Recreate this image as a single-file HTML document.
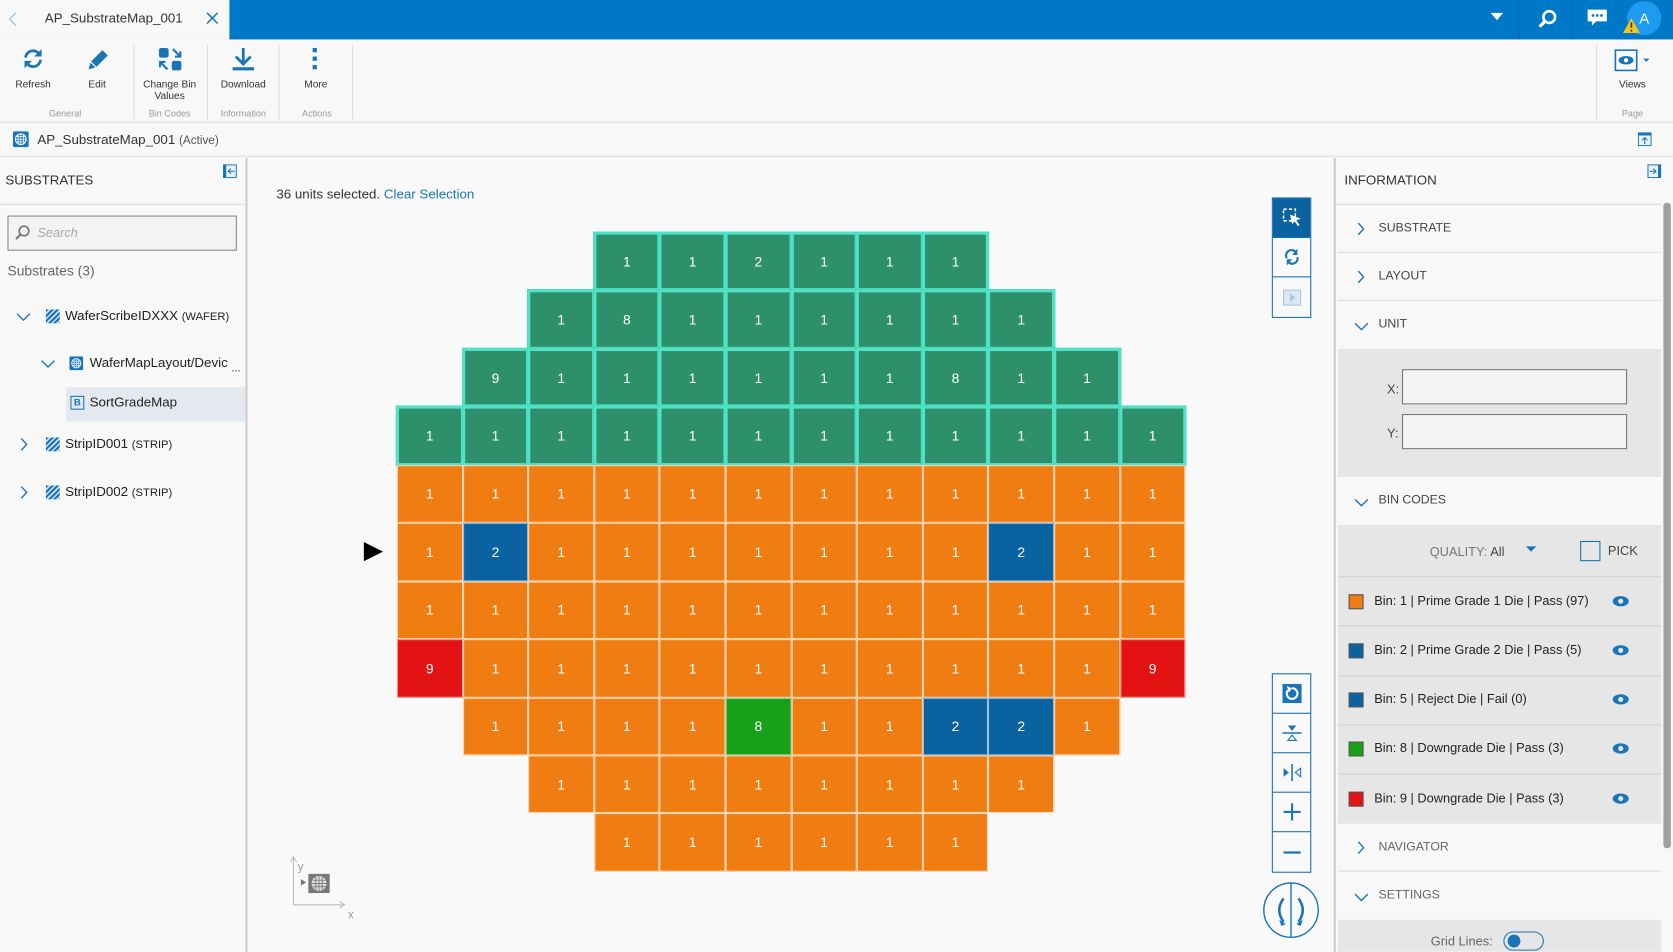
<!DOCTYPE html>
<html><head><meta charset="utf-8"><style>
*{box-sizing:border-box;margin:0;padding:0}
html,body{width:1673px;height:952px;overflow:hidden;background:#f9f9f9}
#s{position:absolute;left:0;top:0;width:1568px;height:892px;transform:scale(1.06696);transform-origin:0 0;font-family:"Liberation Sans",sans-serif;color:#333;background:#f9f9f9}
.a{position:absolute}
.top{left:0;top:0;width:1568px;height:37px;background:#0078c8}
.tab{left:0;top:0;width:215px;height:37px;background:#f8f8f8}
.tb{left:0;top:37px;width:1568px;height:78px;background:#f8f8f8;border-bottom:1px solid #ddd}
.btn{position:absolute;top:44px;font-size:9.5px;text-align:center;color:#333;line-height:11px}
.grp{position:absolute;top:101px;font-size:8.5px;color:#999;text-align:center}
.sep{position:absolute;top:42px;width:1px;height:70px;background:#ddd}
.bc{left:0;top:116px;width:1568px;height:31px;background:#f8f8f8;border-bottom:1px solid #ddd}
.lp{left:0;top:148px;width:232px;height:744px;background:#f8f8f8;border-right:2px solid #ccc}
.rp{left:1250px;top:148px;width:318px;height:744px;background:#f8f8f8;border-left:2px solid #ccc}
.row{position:absolute;left:2px;width:303px;border-bottom:1px solid #ddd;font-size:12px;color:#444}
.cr,.cd{position:absolute}
.grid{position:absolute;left:372px;top:218px;display:grid;grid-template-columns:repeat(12,61.6px);grid-template-rows:repeat(11,54.45px)}
.grid i{display:block}
.grid b{display:flex;align-items:center;justify-content:center;color:#fff;font-weight:normal;font-size:13px;background:#ef7d11;border:1px solid #fbd9b8}
.grid b.g{background:#2e8f6b;border:3px solid #4fe2c6;margin:-1px}
.grid b.u{background:#0a63a0;border-color:#9cc0dc}
.grid b.r{background:#e41313;border-color:#f4a0a0}
.grid b.n{background:#18a01a;border-color:#a8d8a8}
.tool{position:absolute;left:1192px;width:37px;border:1.5px solid #1a6fa8;background:#f9f9f9}
.tool div{height:37px;border-bottom:1px solid #1a6fa8;display:flex;align-items:center;justify-content:center;color:#1a6fa8}
.tool div:last-child{border-bottom:none}
.bin{position:absolute;left:2px;width:303px;height:46.5px;border-bottom:1px solid #d0d0d0;font-size:12px;color:#222}
.sw{position:absolute;left:10px;top:16px;width:14px;height:14px;border:1px solid #555}
.eye{position:absolute;left:257px;top:17px}
</style></head><body><div id="s">
<div class="a top"></div><div class="a tab"></div>
<svg class="a" style="left:8px;top:11px" width="8" height="14"><path d="M7 1L1 7L7 13" stroke="#9cc6e6" fill="none" stroke-width="1.3"/></svg>
<div class="a" style="left:42px;top:10px;font-size:12.5px;color:#333">AP_SubstrateMap_001</div>
<svg class="a" style="left:193px;top:11px" width="12" height="12"><path d="M1 1L11 11M11 1L1 11" stroke="#1a75b8" stroke-width="1.4"/></svg>
<svg class="a" style="left:1397px;top:12px" width="12" height="8"><path d="M0 0H12L6 7Z" fill="#fff"/></svg>
<div class="a" style="left:1423px;top:0;width:1px;height:37px;background:#0a68ad"></div>
<svg class="a" style="left:1440px;top:8px" width="20" height="20"><circle cx="12" cy="8" r="5.5" stroke="#fff" stroke-width="2.5" fill="none"/><path d="M8 12L3 17" stroke="#fff" stroke-width="3"/></svg>
<div class="a" style="left:1473px;top:0;width:1px;height:37px;background:#0a68ad"></div>
<svg class="a" style="left:1487px;top:8px" width="20" height="18"><path d="M1 1H19V12H9L5 16V12H1Z" fill="#fff"/><circle cx="6" cy="6.5" r="1.3" fill="#0078c8"/><circle cx="10" cy="6.5" r="1.3" fill="#0078c8"/><circle cx="14" cy="6.5" r="1.3" fill="#0078c8"/></svg>
<div class="a" style="left:1525px;top:1px;width:32px;height:32px;border-radius:50%;background:#1d9bf0;color:#fff;font-size:14px;text-align:center;line-height:32px">A</div>
<svg class="a" style="left:1521px;top:17px" width="16" height="14"><path d="M8 0L16 14H0Z" fill="#f5c518"/><path d="M8 4V9M8 11V12.5" stroke="#333" stroke-width="1.6"/></svg>

<div class="a tb"></div>
<svg class="a" style="left:20px;top:44px" width="22" height="22"><path d="M4 10A7 7 0 0 1 17 7M18 12A7 7 0 0 1 5 15" stroke="#1a75b8" stroke-width="2.6" fill="none"/><path d="M19 2V9H12Z M3 20V13H10Z" fill="#1a75b8"/></svg>
<div class="btn" style="left:8px;top:74px;width:46px">Refresh</div>
<svg class="a" style="left:80px;top:44px" width="24" height="24"><path d="M3 21L5 14L16 3L21 8L10 19Z" fill="#1a75b8"/><path d="M5 14L10 19" stroke="#f8f8f8" stroke-width="1.2"/></svg>
<div class="btn" style="left:70px;top:74px;width:42px">Edit</div>
<div class="sep" style="left:125px"></div>
<svg class="a" style="left:148px;top:44px" width="24" height="24"><rect x="1" y="1" width="9" height="9" rx="2" fill="#1a75b8"/><rect x="13" y="13" width="9" height="9" rx="2" fill="#1a75b8"/><path d="M14 2L21 9M21 4V9H16M9 21L2 14M2 19V14H7" stroke="#1a75b8" stroke-width="2" fill="none"/></svg>
<div class="btn" style="left:128px;top:74px;width:62px">Change Bin<br>Values</div>
<div class="sep" style="left:194px"></div>
<svg class="a" style="left:217px;top:44px" width="22" height="24"><path d="M11 1V15M4 9L11 16L18 9" stroke="#1a75b8" stroke-width="2.6" fill="none"/><rect x="1" y="19" width="20" height="3" fill="#1a75b8"/></svg>
<div class="btn" style="left:197px;top:74px;width:62px">Download</div>
<div class="sep" style="left:261px"></div>
<div class="a" style="left:293px;top:45px;width:4px;height:4px;background:#1a75b8;box-shadow:0 8px 0 #1a75b8,0 16px 0 #1a75b8"></div>
<div class="btn" style="left:268px;top:74px;width:56px">More</div>
<div class="sep" style="left:330px"></div>
<div class="grp" style="left:30px;width:62px">General</div>
<div class="grp" style="left:128px;width:62px">Bin Codes</div>
<div class="grp" style="left:197px;width:62px">Information</div>
<div class="grp" style="left:266px;width:62px">Actions</div>
<div class="sep" style="left:1496px"></div>
<svg class="a" style="left:1513px;top:46px" width="36" height="22"><rect x="1" y="1" width="20" height="19" fill="none" stroke="#1a75b8" stroke-width="1.5"/><ellipse cx="11" cy="10.5" rx="7" ry="4" fill="#1a75b8"/><circle cx="11" cy="10.5" r="2" fill="#fff"/><path d="M27 9H33L30 12Z" fill="#1a75b8"/></svg>
<div class="btn" style="left:1505px;top:74px;width:50px">Views</div>
<div class="grp" style="left:1505px;width:50px">Page</div>

<div class="a bc"></div>
<svg class="a" style="left:12px;top:123px" width="15" height="15"><rect width="15" height="15" rx="2" fill="#1a75b8"/><circle cx="7.5" cy="7.5" r="5" fill="none" stroke="#fff"/><path d="M2.5 7.5H12.5M7.5 2.5V12.5M4 5H11M4 10H11M5 3V12M10 3V12" stroke="#fff" stroke-width=".7"/></svg>
<div class="a" style="left:35px;top:124px;font-size:12.5px">AP_SubstrateMap_001 <span style="font-size:11px;color:#555">(Active)</span></div>
<svg class="a" style="left:1535px;top:124px" width="13" height="13"><rect x=".5" y=".5" width="12" height="12" fill="#e8f1f8" stroke="#1a75b8"/><rect x=".5" y=".5" width="12" height="2.5" fill="#1a75b8"/><path d="M6.5 11V5M4 7.5L6.5 5L9 7.5" stroke="#1a75b8" fill="none"/></svg>

<div class="a lp">
<div class="a" style="left:5px;top:14px;font-size:12.5px;color:#333">SUBSTRATES</div>
<svg class="a" style="left:209px;top:6px" width="13" height="13"><rect x=".5" y=".5" width="12" height="12" fill="#e8f1f8" stroke="#1a75b8"/><rect x=".5" y=".5" width="2.5" height="12" fill="#1a75b8"/><path d="M11 6.5H5M7.5 4L5 6.5L7.5 9" stroke="#1a75b8" fill="none"/></svg>
<div class="a" style="left:0;top:43px;width:230px;height:1px;background:#ddd"></div>
<div class="a" style="left:7px;top:54px;width:215px;height:33px;border:1px solid #888;background:#f3f3f3"></div>
<svg class="a" style="left:13px;top:62px" width="16" height="16"><circle cx="9.5" cy="6.5" r="4.5" fill="none" stroke="#777" stroke-width="1.6"/><path d="M6 10L2 14" stroke="#777" stroke-width="2"/></svg>
<div class="a" style="left:35px;top:63px;font-size:12px;color:#aaa;font-style:italic">Search</div>
<div class="a" style="left:7px;top:98px;font-size:13px;color:#666">Substrates (3)</div>
<svg class="a" style="left:15px;top:145px" width="14" height="8"><path d="M1 1L7 7L13 1" stroke="#1a75b8" fill="none" stroke-width="1.3"/></svg>
<div class="a" style="left:43px;top:142px;width:13px;height:13px;background:repeating-linear-gradient(135deg,#1a75b8 0 2px,#cfe0ef 2px 3.5px)"></div>
<div class="a" style="left:61px;top:141px;font-size:12.5px;color:#222">WaferScribeIDXXX <span style="font-size:10.5px">(WAFER)</span></div>
<svg class="a" style="left:38px;top:189px" width="14" height="8"><path d="M1 1L7 7L13 1" stroke="#1a75b8" fill="none" stroke-width="1.3"/></svg>
<svg class="a" style="left:65px;top:186px" width="13" height="13"><rect width="13" height="13" rx="1.5" fill="#1a75b8"/><circle cx="6.5" cy="6.5" r="4.3" fill="none" stroke="#fff" stroke-width=".8"/><path d="M2 6.5H11M6.5 2V11M3 4.5H10M3 8.5H10M4.5 3V10M8.5 3V10" stroke="#fff" stroke-width=".6"/></svg>
<div class="a" style="left:84px;top:185px;font-size:12.5px;color:#222">WaferMapLayout/Devic</div>
<div class="a" style="left:217px;top:192px;font-size:10px;color:#222">...</div>
<div class="a" style="left:62px;top:215px;width:168px;height:32px;background:#e3e9ef"></div>
<div class="a" style="left:66px;top:223px;width:13px;height:13px;border:1.3px solid #1a75b8;color:#1a75b8;font-size:9px;font-weight:bold;text-align:center;line-height:11px">B</div>
<div class="a" style="left:84px;top:222px;font-size:12.5px;color:#222">SortGradeMap</div>
<svg class="a" style="left:19px;top:262px" width="7" height="13"><path d="M1 1L6 6.5L1 12" stroke="#1a75b8" fill="none" stroke-width="1.3"/></svg>
<div class="a" style="left:43px;top:262px;width:13px;height:13px;background:repeating-linear-gradient(135deg,#1a75b8 0 2px,#cfe0ef 2px 3.5px)"></div>
<div class="a" style="left:61px;top:261px;font-size:12.5px;color:#222">StripID001 <span style="font-size:10.5px">(STRIP)</span></div>
<svg class="a" style="left:19px;top:307px" width="7" height="13"><path d="M1 1L6 6.5L1 12" stroke="#1a75b8" fill="none" stroke-width="1.3"/></svg>
<div class="a" style="left:43px;top:307px;width:13px;height:13px;background:repeating-linear-gradient(135deg,#1a75b8 0 2px,#cfe0ef 2px 3.5px)"></div>
<div class="a" style="left:61px;top:306px;font-size:12.5px;color:#222">StripID002 <span style="font-size:10.5px">(STRIP)</span></div>
</div>

<div class="a" style="left:259px;top:175px;font-size:12.5px;color:#333">36 units selected. <span style="color:#1a75b8">Clear Selection</span></div>

<div class="grid">
<i></i><i></i><i></i><b class="g">1</b><b class="g">1</b><b class="g">2</b><b class="g">1</b><b class="g">1</b><b class="g">1</b><i></i><i></i><i></i>
<i></i><i></i><b class="g">1</b><b class="g">8</b><b class="g">1</b><b class="g">1</b><b class="g">1</b><b class="g">1</b><b class="g">1</b><b class="g">1</b><i></i><i></i>
<i></i><b class="g">9</b><b class="g">1</b><b class="g">1</b><b class="g">1</b><b class="g">1</b><b class="g">1</b><b class="g">1</b><b class="g">8</b><b class="g">1</b><b class="g">1</b><i></i>
<b class="g">1</b><b class="g">1</b><b class="g">1</b><b class="g">1</b><b class="g">1</b><b class="g">1</b><b class="g">1</b><b class="g">1</b><b class="g">1</b><b class="g">1</b><b class="g">1</b><b class="g">1</b>
<b>1</b><b>1</b><b>1</b><b>1</b><b>1</b><b>1</b><b>1</b><b>1</b><b>1</b><b>1</b><b>1</b><b>1</b>
<b>1</b><b class="u">2</b><b>1</b><b>1</b><b>1</b><b>1</b><b>1</b><b>1</b><b>1</b><b class="u">2</b><b>1</b><b>1</b>
<b>1</b><b>1</b><b>1</b><b>1</b><b>1</b><b>1</b><b>1</b><b>1</b><b>1</b><b>1</b><b>1</b><b>1</b>
<b class="r">9</b><b>1</b><b>1</b><b>1</b><b>1</b><b>1</b><b>1</b><b>1</b><b>1</b><b>1</b><b>1</b><b class="r">9</b>
<i></i><b>1</b><b>1</b><b>1</b><b>1</b><b class="n">8</b><b>1</b><b>1</b><b class="u">2</b><b class="u">2</b><b>1</b><i></i>
<i></i><i></i><b>1</b><b>1</b><b>1</b><b>1</b><b>1</b><b>1</b><b>1</b><b>1</b><i></i><i></i>
<i></i><i></i><i></i><b>1</b><b>1</b><b>1</b><b>1</b><b>1</b><b>1</b><i></i><i></i><i></i>
</div>
<svg class="a" style="left:340px;top:508px" width="20" height="18"><path d="M1 0L19 9L1 18Z" fill="#000"/></svg>

<svg class="a" style="left:270px;top:800px" width="68" height="66"><path d="M5 4V48H52M2 8L5 3L8 8M48 45L53 48L48 51" stroke="#bbb" fill="none"/><text x="9" y="16" font-size="11" fill="#999" font-family="Liberation Sans">y</text><text x="56" y="61" font-size="11" fill="#999" font-family="Liberation Sans">x</text><path d="M12 24L17 27L12 30Z" fill="#777"/><rect x="19" y="19" width="20" height="18" fill="#777"/><circle cx="29" cy="28" r="7" fill="#ddd"/><path d="M22 28H36M29 21V35M23 25H35M23 31H35M26 22V34M32 22V34" stroke="#777" stroke-width=".8"/></svg>

<div class="tool" style="top:185px">
<div style="background:#0a63a0"><svg width="20" height="20"><rect x="2" y="2" width="11" height="11" fill="none" stroke="#fff" stroke-width="1.5" stroke-dasharray="3 2"/><path d="M8 7L18 11L14 12.5L17 17L15.5 18L12.5 13.5L10 16Z" fill="#fff"/></svg></div>
<div><svg width="16" height="18"><path d="M3 10A5 5 0 0 1 12 5M13 9A5 5 0 0 1 4 13" stroke="#1a75b8" stroke-width="2" fill="none"/><path d="M13 1V7H8ZM3 17V11H8Z" fill="#1a75b8"/></svg></div>
<div><svg width="18" height="16"><rect x="1" y="1" width="16" height="14" fill="#dbe8f3" stroke="#a8c6df"/><path d="M7 4L12 8L7 12Z" fill="#a8c6df"/></svg></div>
</div>
<div class="tool" style="top:631px">
<div><svg width="18" height="18"><rect width="18" height="18" fill="#1a75b8"/><path d="M5 6A5 5 0 1 0 9 4" stroke="#fff" stroke-width="2" fill="none"/><path d="M4 2L9 4L6 8Z" fill="#fff"/></svg></div>
<div><svg width="18" height="16"><path d="M5 1H13L9 6Z" fill="#1a75b8"/><path d="M0 8H18" stroke="#1a75b8" stroke-width="1.5"/><path d="M5 15H13L9 10Z" fill="none" stroke="#1a75b8"/></svg></div>
<div><svg width="18" height="18"><path d="M1 5V13L6 9Z" fill="#1a75b8"/><path d="M9 1V17" stroke="#1a75b8" stroke-width="1.5"/><path d="M17 5V13L12 9Z" fill="none" stroke="#1a75b8"/></svg></div>
<div><svg width="18" height="18"><path d="M9 1V17M1 9H17" stroke="#1a75b8" stroke-width="2"/></svg></div>
<div><svg width="18" height="18"><path d="M1 9H17" stroke="#1a75b8" stroke-width="2"/></svg></div>
</div>
<svg class="a" style="left:1183px;top:826px" width="54" height="54"><circle cx="27" cy="27" r="25.5" fill="#f9f9f9" stroke="#1a75b8" stroke-width="1.3"/><path d="M27 2V52" stroke="#1a75b8" stroke-width="1.3"/><path d="M20 16Q12 27 20 38M34 16Q42 27 34 38" stroke="#1a75b8" stroke-width="2.4" fill="none"/><path d="M16 36L22 40L18 42ZM38 36L32 40L36 42Z" fill="#1a75b8"/></svg>

<div class="a rp">
<div class="a" style="left:8px;top:14px;font-size:12.5px;color:#333">INFORMATION</div>
<svg class="a" style="left:292px;top:6px" width="13" height="13"><rect x=".5" y=".5" width="12" height="12" fill="#e8f1f8" stroke="#1a75b8"/><rect x="10" y=".5" width="2.5" height="12" fill="#1a75b8"/><path d="M2 6.5H8M5.5 4L8 6.5L5.5 9" stroke="#1a75b8" fill="none"/></svg>
<div class="a" style="left:0;top:43px;width:305px;height:1px;background:#ddd"></div>
<div class="row" style="top:44px;height:45px"><svg class="cr" style="left:18px;top:16px" width="7" height="13"><path d="M1 1L6 6.5L1 12" stroke="#1a75b8" fill="none" stroke-width="1.3"/></svg><span class="a" style="left:38px;top:16px;font-size:11.5px">SUBSTRATE</span></div>
<div class="row" style="top:89px;height:45px"><svg class="cr" style="left:18px;top:16px" width="7" height="13"><path d="M1 1L6 6.5L1 12" stroke="#1a75b8" fill="none" stroke-width="1.3"/></svg><span class="a" style="left:38px;top:16px;font-size:11.5px">LAYOUT</span></div>
<div class="row" style="top:134px;height:45px;border:none"><svg class="cd" style="left:15px;top:20px" width="14" height="8"><path d="M1 1L7 7L13 1" stroke="#1a75b8" fill="none" stroke-width="1.3"/></svg><span class="a" style="left:38px;top:16px;font-size:11.5px">UNIT</span></div>
<div class="a" style="left:2px;top:179px;width:303px;height:120px;background:#e6e6e6"></div>
<div class="a" style="left:48px;top:210px;font-size:12px;color:#444">X:</div>
<div class="a" style="left:62px;top:198px;width:211px;height:33px;border:1px solid #777;background:#f4f4f4"></div>
<div class="a" style="left:48px;top:251px;font-size:12px;color:#444">Y:</div>
<div class="a" style="left:62px;top:240px;width:211px;height:33px;border:1px solid #777;background:#f4f4f4"></div>
<div class="row" style="top:299px;height:45px;border:none"><svg class="cd" style="left:15px;top:20px" width="14" height="8"><path d="M1 1L7 7L13 1" stroke="#1a75b8" fill="none" stroke-width="1.3"/></svg><span class="a" style="left:38px;top:16px;font-size:11.5px">BIN CODES</span></div>
<div class="a" style="left:2px;top:344px;width:303px;height:280px;background:#e6e6e6"></div>
<div class="a" style="left:88px;top:362px;font-size:12px;color:#777">QUALITY: <span style="color:#444">All</span></div>
<svg class="a" style="left:178px;top:364px" width="10" height="6"><path d="M0 0H10L5 5Z" fill="#1a75b8"/></svg>
<div class="a" style="left:229px;top:359px;width:19px;height:19px;border:1px solid #1a6fa8"></div>
<div class="a" style="left:255px;top:361px;font-size:12px;color:#444">PICK</div>
<div class="bin" style="top:392px;border-top:1px solid #d0d0d0"><span class="sw" style="background:#ef7d11"></span><span class="a" style="left:34px;top:15px">Bin: 1 | Prime Grade 1 Die | Pass (97)</span><svg class="eye" width="16" height="11"><ellipse cx="8" cy="5.5" rx="7.5" ry="4.8" fill="#1a75b8"/><circle cx="8" cy="5.5" r="2.4" fill="#e6e6e6"/></svg></div>
<div class="bin" style="top:439px"><span class="sw" style="background:#0a63a0"></span><span class="a" style="left:34px;top:15px">Bin: 2 | Prime Grade 2 Die | Pass (5)</span><svg class="eye" width="16" height="11"><ellipse cx="8" cy="5.5" rx="7.5" ry="4.8" fill="#1a75b8"/><circle cx="8" cy="5.5" r="2.4" fill="#e6e6e6"/></svg></div>
<div class="bin" style="top:485px"><span class="sw" style="background:#0a63a0"></span><span class="a" style="left:34px;top:15px">Bin: 5 | Reject Die | Fail (0)</span><svg class="eye" width="16" height="11"><ellipse cx="8" cy="5.5" rx="7.5" ry="4.8" fill="#1a75b8"/><circle cx="8" cy="5.5" r="2.4" fill="#e6e6e6"/></svg></div>
<div class="bin" style="top:531px"><span class="sw" style="background:#18a01a"></span><span class="a" style="left:34px;top:15px">Bin: 8 | Downgrade Die | Pass (3)</span><svg class="eye" width="16" height="11"><ellipse cx="8" cy="5.5" rx="7.5" ry="4.8" fill="#1a75b8"/><circle cx="8" cy="5.5" r="2.4" fill="#e6e6e6"/></svg></div>
<div class="bin" style="top:578px;border:none"><span class="sw" style="background:#e41313"></span><span class="a" style="left:34px;top:15px">Bin: 9 | Downgrade Die | Pass (3)</span><svg class="eye" width="16" height="11"><ellipse cx="8" cy="5.5" rx="7.5" ry="4.8" fill="#1a75b8"/><circle cx="8" cy="5.5" r="2.4" fill="#e6e6e6"/></svg></div>
<div class="row" style="top:624px;height:45px"><svg class="cr" style="left:18px;top:16px" width="7" height="13"><path d="M1 1L6 6.5L1 12" stroke="#1a75b8" fill="none" stroke-width="1.3"/></svg><span class="a" style="left:38px;top:16px;font-size:11.5px;color:#666">NAVIGATOR</span></div>
<div class="row" style="top:669px;height:45px;border:none"><svg class="cd" style="left:15px;top:20px" width="14" height="8"><path d="M1 1L7 7L13 1" stroke="#1a75b8" fill="none" stroke-width="1.3"/></svg><span class="a" style="left:38px;top:16px;font-size:11.5px;color:#666">SETTINGS</span></div>
<div class="a" style="left:2px;top:714px;width:303px;height:30px;background:#e6e6e6"></div>
<div class="a" style="left:89px;top:727px;font-size:12px;color:#666">Grid Lines:</div>
<div class="a" style="left:157px;top:725px;width:38px;height:18px;border:1.3px solid #1a75b8;border-radius:9px"><div style="position:absolute;left:3px;top:2px;width:12px;height:12px;border-radius:50%;background:#1a75b8"></div></div>
<div class="a" style="left:307px;top:42px;width:7px;height:605px;background:#a0a0a0;border-radius:3px"></div>
</div>
</div></body></html>
